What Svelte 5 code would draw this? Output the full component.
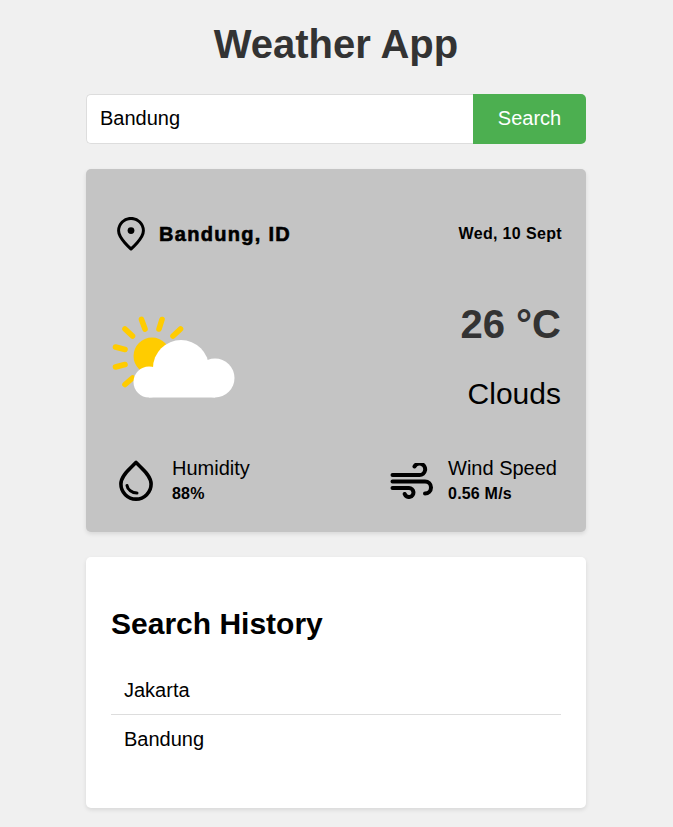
<script>
	let city = 'Bandung';
	const history = ['Jakarta', 'Bandung'];
	const rays = [
		[31.5, 5.5, 35, 15],
		[52, 5.5, 49, 15],
		[15, 15, 22.5, 22],
		[70.5, 15, 63, 22],
		[5.5, 33, 15, 35.5],
		[5.5, 53, 15, 50.5],
		[15, 70.5, 22.5, 64]
	];
</script>

<div class="app">
	<h1>Weather App</h1>

	<div class="search-box">
		<input type="text" bind:value={city} />
		<button>Search</button>
	</div>

	<div class="weather-card">
		<div class="top-row">
			<div class="location">
				<svg class="pin" viewBox="0 0 28 34" fill="none" stroke="#000" stroke-width="3">
					<path d="M14 32 C14 32 1.6 21.5 1.6 13.8 A12.4 12.4 0 0 1 26.4 13.8 C26.4 21.5 14 32 14 32 Z" stroke-linejoin="round" />
					<circle cx="14" cy="13.6" r="3.4" fill="#000" stroke="none" />
				</svg>
				<span class="city">Bandung, ID</span>
			</div>
			<div class="date">Wed, 10 Sept</div>
		</div>

		<div class="middle-row">
			<svg class="weather-icon" viewBox="0 0 126 86" width="126" height="86">
				<g stroke="#fc0" stroke-width="5.6" stroke-linecap="round">
					{#each rays as [x1, y1, x2, y2]}
						<line {x1} {y1} {x2} {y2} />
					{/each}
				</g>
				<circle cx="42" cy="42" r="18.5" fill="#fc0" />
				<g fill="#fff">
					<circle cx="39" cy="68" r="15.5" />
					<circle cx="71" cy="54" r="28" />
					<circle cx="105" cy="64" r="19.5" />
					<rect x="39" y="60" width="66" height="23.5" />
				</g>
			</svg>
			<div class="temp-block">
				<div class="temp">26 °C</div>
				<div class="condition">Clouds</div>
			</div>
		</div>

		<div class="bottom-row">
			<div class="stat">
				<svg class="stat-icon drop" viewBox="0 0 34 41" fill="none" stroke="#000" stroke-width="3.6" stroke-linecap="round" stroke-linejoin="round">
					<path d="M17 2.4 C12 8 1.9 15 1.9 24 A15.1 15.1 0 0 0 32.1 24 C32.1 15 22 8 17 2.4 Z" />
					<path d="M8 25.5 C8.5 29.5 13 33 18 33" stroke-width="3" />
				</svg>
				<div class="stat-text">
					<div class="stat-label">Humidity</div>
					<div class="stat-value">88%</div>
				</div>
			</div>
			<div class="stat">
				<svg class="stat-icon wind" viewBox="0 0 44 36" fill="none" stroke="#000" stroke-width="4" stroke-linecap="round">
					<path d="M2.5 12 H29.5 A5.7 5.7 0 1 0 24.5 3.5" />
					<path d="M2.5 18.5 H35 A6 6 0 0 1 35 30.5" />
					<path d="M2.5 25 H19 A4.5 4.5 0 1 1 14.7 31" />
				</svg>
				<div class="stat-text">
					<div class="stat-label">Wind Speed</div>
					<div class="stat-value">0.56 M/s</div>
				</div>
			</div>
		</div>
	</div>

	<div class="history-card">
		<h2>Search History</h2>
		<ul>
			{#each history as item}
				<li>{item}</li>
			{/each}
		</ul>
	</div>
</div>

<style>
	:global(body) {
		background: #f0f0f0;
		font-family: 'Liberation Sans', Arial, sans-serif;
	}

	.app {
		width: 500px;
		margin-left: 86px;
		padding-bottom: 19px;
	}

	h1 {
		margin: 0;
		padding-top: 21px;
		height: 94px;
		box-sizing: border-box;
		font-size: 40px;
		line-height: 46px;
		font-weight: 700;
		color: #333;
		text-align: center;
	}

	/* ── Search ── */
	.search-box {
		display: flex;
		height: 50px;
		margin-bottom: 25px;
	}

	input {
		flex: 1;
		min-width: 0;
		box-sizing: border-box;
		padding: 0 13px 2px;
		border: 1px solid #ddd;
		border-right: none;
		border-radius: 5px 0 0 5px;
		background: #fff;
		font-family: inherit;
		font-size: 20px;
		color: #000;
		outline: none;
	}

	button {
		width: 113px;
		border: none;
		border-radius: 0 5px 5px 0;
		background: #4caf50;
		color: #fff;
		font-family: inherit;
		font-size: 20px;
		padding-bottom: 2px;
	}

	/* ── Weather card ── */
	.weather-card {
		box-sizing: border-box;
		height: 363px;
		margin-bottom: 25px;
		padding: 48px 24px 27px 25px;
		background: #c4c4c4;
		border-radius: 5px;
		box-shadow: 0 2px 4px rgba(0, 0, 0, 0.1);
		display: flex;
		flex-direction: column;
	}

	.top-row {
		display: flex;
		justify-content: space-between;
		align-items: center;
	}

	.location {
		display: flex;
		align-items: center;
		gap: 14px;
		margin-left: 6px;
	}

	.pin {
		width: 28px;
		height: 34px;
	}

	.city {
		font-size: 20px;
		font-weight: 700;
		-webkit-text-stroke: 0.6px #000;
		letter-spacing: 1.3px;
	}

	.date {
		font-size: 16px;
		font-weight: 700;
		letter-spacing: 0.35px;
	}

	.middle-row {
		display: flex;
		justify-content: space-between;
		margin-top: 50px;
		padding-right: 1px;
	}

	.weather-icon {
		display: block;
		margin-top: 13px;
		margin-left: -1px;
	}

	.temp {
		font-size: 40px;
		line-height: 46px;
		font-weight: 700;
		color: #333;
		text-align: right;
	}

	.condition {
		margin-top: 30px;
		font-size: 30px;
		line-height: 34px;
		text-align: right;
	}

	.bottom-row {
		display: flex;
		justify-content: space-between;
		margin-top: auto;
		padding-right: 5px;
	}

	.stat {
		display: flex;
		align-items: center;
		gap: 15px;
	}

	.stat:first-child {
		gap: 19px;
	}

	.stat-icon.drop {
		width: 34px;
		height: 41px;
		margin-left: 8px;
	}

	.stat-icon.wind {
		width: 44px;
		height: 36px;
		margin-left: 1px;
		margin-right: -1px;
	}

	.stat-label {
		font-size: 20px;
		line-height: 24px;
	}

	.stat-value {
		margin-top: 3px;
		font-size: 16px;
		line-height: 22px;
		font-weight: 700;
		letter-spacing: 0.2px;
	}

	/* ── History ── */
	.history-card {
		box-sizing: border-box;
		height: 251px;
		padding: 49px 25px 0;
		background: #fff;
		border-radius: 5px;
		box-shadow: 0 2px 4px rgba(0, 0, 0, 0.1);
	}

	h2 {
		margin: 0 0 24px;
		font-size: 30px;
		line-height: 36px;
		font-weight: 700;
		color: #000;
	}

	ul {
		margin: 0;
		padding: 0;
		list-style: none;
	}

	li {
		padding: 12px 13px;
		font-size: 20px;
		line-height: 24px;
		border-bottom: 1px solid #ddd;
	}

	li:last-child {
		border-bottom: none;
	}
</style>
